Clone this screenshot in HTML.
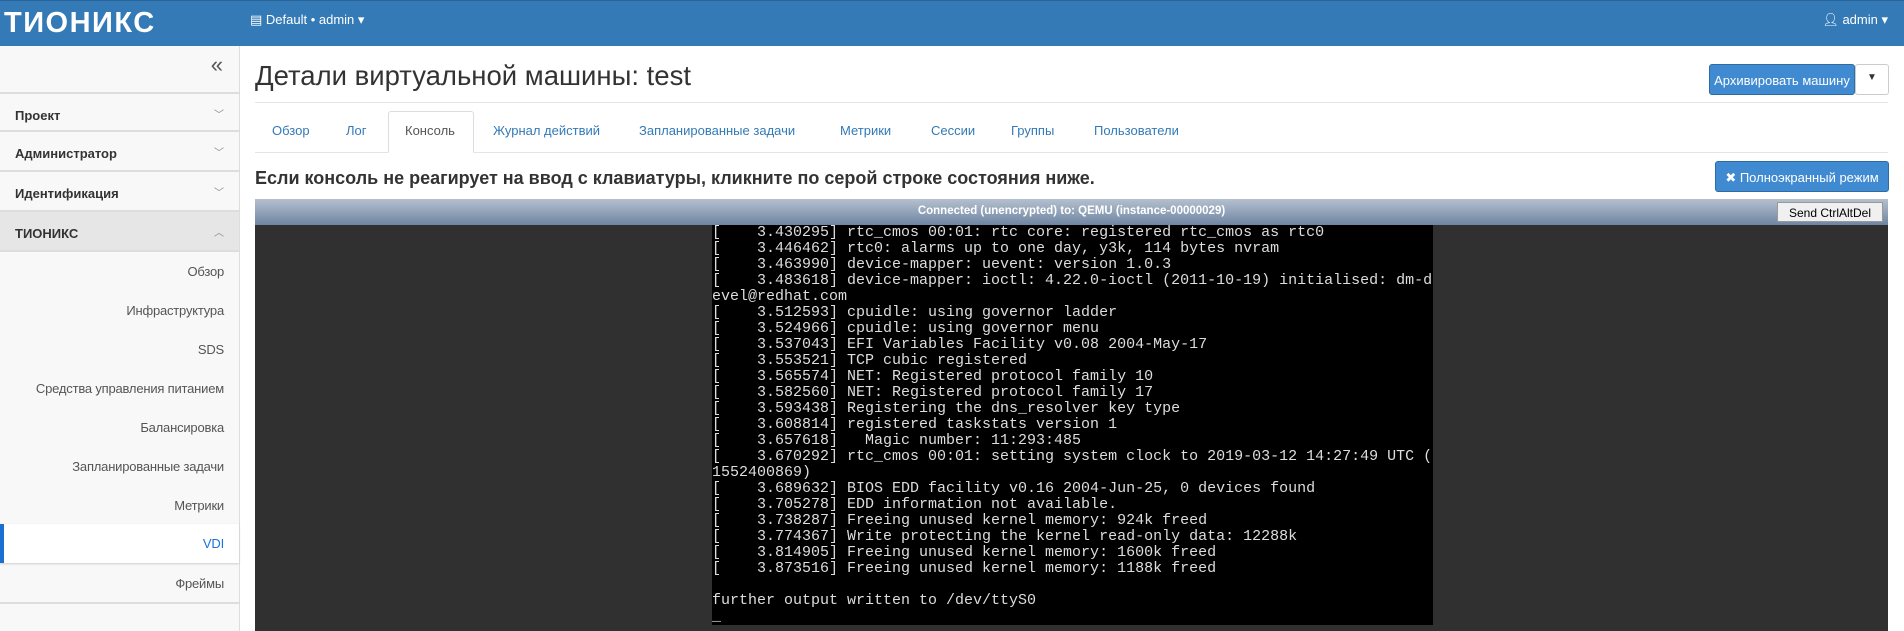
<!DOCTYPE html>
<html><head><meta charset="utf-8"><style>
*{box-sizing:border-box;margin:0;padding:0}
body{width:1904px;height:631px;overflow:hidden;background:#fff;font-family:"Liberation Sans","DejaVu Sans",sans-serif;position:relative}
.hdr{position:absolute;left:0;top:0;width:1904px;height:46px;background:#337ab7;border-top:1px solid #2a6496}
.logo{position:absolute;left:4px;top:6px;color:#fff;font-weight:bold;font-size:29px;letter-spacing:1.5px}
.proj{position:absolute;left:250px;top:11px;color:#fff;font-size:13px}
.user{position:absolute;right:16px;top:11px;color:#fff;font-size:13px}
.side{position:absolute;left:0;top:46px;width:240px;height:585px;background:#f8f8f8;border-right:1px solid #ddd}
.col{position:absolute;right:16px;top:6px;font-size:22px;color:#555}
.it{position:absolute;left:0;width:239px;height:40px;border-bottom:2px solid #ddd;font-size:13px;font-weight:bold;color:#333;padding:14px 0 0 15px}
.it .ch{position:absolute;right:15px;top:12px;font-size:10px;color:#888;font-weight:normal}
.sub{position:absolute;left:0;width:239px;height:39px;font-size:13px;color:#555;text-align:right;padding:12px 15px 0 0;letter-spacing:-0.2px}
h1{position:absolute;left:255px;top:60px;font-size:27.5px;font-weight:normal;color:#333}
.hr{position:absolute;left:255px;width:1633px;height:1px;background:#e5e5e5}
.btn{position:absolute;background:#3f8ad0;color:#fff;font-size:13px;border:1px solid #2e6da4;border-radius:3px}
.tab{position:absolute;top:123px;font-size:13px;color:#337ab7}
.warn{position:absolute;left:255px;top:168px;font-size:18px;font-weight:bold;color:#333}
.bar{position:absolute;left:255px;top:199px;width:1633px;height:26px;background:linear-gradient(#b4c0ce,#6f85a3);color:#fff;font-size:11.5px;font-weight:bold;text-align:center;padding-top:6px}
.cad{position:absolute;left:1777px;top:202px;width:106px;height:20px;background:#f0f0f0;border:1px solid #999;font-size:12px;color:#000;text-align:center;padding-top:3px}
.con{position:absolute;left:255px;top:225px;width:1633px;height:406px;background:#303030}
.term{position:absolute;left:712px;top:225px;width:721px;height:400px;background:#000;color:#ddd;font-family:"Liberation Mono",monospace;font-size:15px;line-height:16px;white-space:pre;overflow:hidden}
</style></head><body>
<div class="hdr"><div class="logo">ТИОНИКС</div><div class="proj">&#9636; Default • admin ▾</div><div class="user">&#128100;︎ admin ▾</div></div>
<div class="side">
<div class="col">«</div>
<div class="it" style="top:46px;border-top:2px solid #ddd">Проект<span class="ch">﹀</span></div>
<div class="it" style="top:86px">Администратор<span class="ch">﹀</span></div>
<div class="it" style="top:126px">Идентификация<span class="ch">﹀</span></div>
<div class="it" style="top:166px;background:#e6e6e6">ТИОНИКС<span class="ch">︿</span></div>
<div class="sub" style="top:206px">Обзор</div>
<div class="sub" style="top:245px">Инфраструктура</div>
<div class="sub" style="top:284px">SDS</div>
<div class="sub" style="top:323px">Средства управления питанием</div>
<div class="sub" style="top:362px">Балансировка</div>
<div class="sub" style="top:401px">Запланированные задачи</div>
<div class="sub" style="top:440px">Метрики</div>
<div class="sub" style="top:478px;background:#fff;color:#1a73d9;border-left:4px solid #1a6fd1;box-shadow:0 1px 2px #ccc">VDI</div>
<div class="sub" style="top:518px;border-bottom:2px solid #ddd;height:40px">Фреймы</div>
</div>
<h1>Детали виртуальной машины: test</h1>
<div class="btn" style="left:1709px;top:64px;width:146px;height:31px;padding-top:8px;text-align:center">Архивировать машину</div>
<div class="btn" style="left:1855px;top:64px;width:34px;height:31px;background:#fff;border-color:#ccc;color:#333;text-align:center;padding-top:7px;font-size:10px">▼</div>
<div class="hr" style="top:102px"></div>
<div style="position:absolute;left:388px;top:111px;width:86px;height:42px;border:1px solid #ddd;border-bottom:1px solid #fff;background:#fff;border-radius:3px 3px 0 0"></div>
<div class="hr" style="top:152px;width:133px"></div><div class="hr" style="top:152px;left:474px;width:1414px"></div>
<div class="tab" style="left:272px">Обзор</div>
<div class="tab" style="left:346px">Лог</div>
<div class="tab" style="left:405px;color:#555">Консоль</div>
<div class="tab" style="left:493px">Журнал действий</div>
<div class="tab" style="left:639px">Запланированные задачи</div>
<div class="tab" style="left:840px">Метрики</div>
<div class="tab" style="left:931px">Сессии</div>
<div class="tab" style="left:1011px">Группы</div>
<div class="tab" style="left:1094px">Пользователи</div>
<div class="warn">Если консоль не реагирует на ввод с клавиатуры, кликните по серой строке состояния ниже.</div>
<div class="btn" style="left:1715px;top:161px;width:174px;height:31px;padding-top:8px;text-align:center">✖ Полноэкранный режим</div>
<div class="bar">Connected (unencrypted) to: QEMU (instance-00000029)</div>
<div class="cad">Send CtrlAltDel</div>
<div class="con"></div>
<div class="term">[    3.430295] rtc_cmos 00:01: rtc core: registered rtc_cmos as rtc0
[    3.446462] rtc0: alarms up to one day, y3k, 114 bytes nvram
[    3.463990] device-mapper: uevent: version 1.0.3
[    3.483618] device-mapper: ioctl: 4.22.0-ioctl (2011-10-19) initialised: dm-d
evel@redhat.com
[    3.512593] cpuidle: using governor ladder
[    3.524966] cpuidle: using governor menu
[    3.537043] EFI Variables Facility v0.08 2004-May-17
[    3.553521] TCP cubic registered
[    3.565574] NET: Registered protocol family 10
[    3.582560] NET: Registered protocol family 17
[    3.593438] Registering the dns_resolver key type
[    3.608814] registered taskstats version 1
[    3.657618]   Magic number: 11:293:485
[    3.670292] rtc_cmos 00:01: setting system clock to 2019-03-12 14:27:49 UTC (
1552400869)
[    3.689632] BIOS EDD facility v0.16 2004-Jun-25, 0 devices found
[    3.705278] EDD information not available.
[    3.738287] Freeing unused kernel memory: 924k freed
[    3.774367] Write protecting the kernel read-only data: 12288k
[    3.814905] Freeing unused kernel memory: 1600k freed
[    3.873516] Freeing unused kernel memory: 1188k freed

further output written to /dev/ttyS0
_</div>
</body></html>
